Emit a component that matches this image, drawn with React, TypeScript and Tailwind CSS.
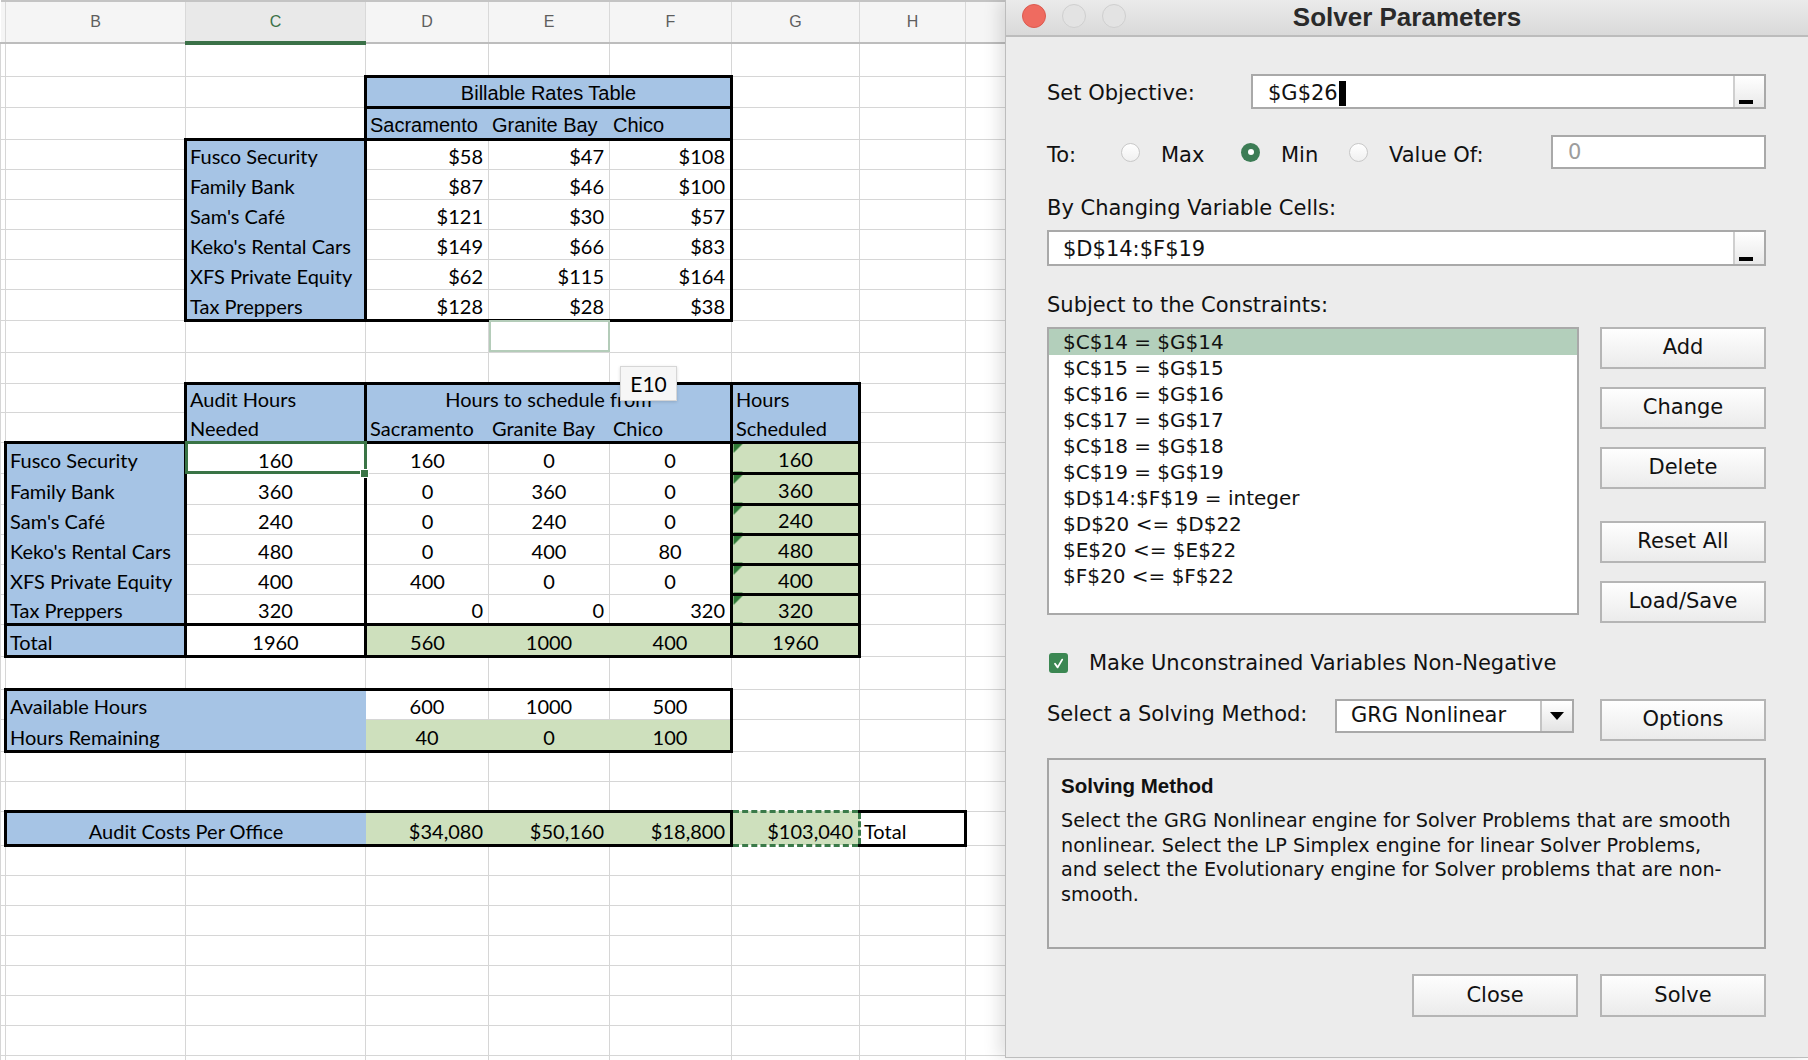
import React from "react";

const FILL: Record<string, string> = {
  b: "border bg-[#a6c4e5] border-[#a6c4e5]",
  g: "border bg-[#cee0bd] border-[#cee0bd]",
  n: "border border-[#d6d6d6]",
  x: "",
};

const ALIGN: Record<string, string> = {
  l: "text-left pl-[3px]",
  c: "text-center",
  r: "text-right pr-[5px]",
  "": "",
};

function Td({
  children,
  fill = "n",
  e = "",
  a = "",
  arial,
  span,
  x = "",
}: {
  children?: React.ReactNode;
  fill?: string;
  e?: string;
  a?: string;
  arial?: boolean;
  span?: number;
  x?: string;
}) {
  const edges = [
    e.includes("t") ? "border-t-[3px] border-t-black" : "",
    e.includes("r") ? "border-r-[3px] border-r-black" : "",
    e.includes("b") ? "border-b-[3px] border-b-black" : "",
    e.includes("l") ? "border-l-[3px] border-l-black" : "",
  ].join(" ");
  return (
    <td
      colSpan={span}
      className={`p-0 align-bottom leading-[26px] whitespace-nowrap ${FILL[fill]} ${edges} ${ALIGN[a]} ${
        arial ? "font-['Liberation_Sans',Arial,sans-serif]" : ""
      } ${x}`}
    >
      {children}
    </td>
  );
}

const empty = (n: number, k: string) => Array.from({ length: n }, (_, i) => <Td key={k + i} />);

// row heights, rows 1..34
const RH = [
  "h-[33px]", "h-[31px]", "h-[32px]", "h-[30px]", "h-[30px]", "h-[30px]", "h-[30px]", "h-[30px]",
  "h-[31px]", "h-[32px]", "h-[31px]", "h-[29px]", "h-[30px]", "h-[31px]", "h-[31px]", "h-[30px]",
  "h-[30px]", "h-[30px]", "h-[30px]", "h-[32px]", "h-[33px]", "h-[30px]", "h-[32px]", "h-[30px]",
  "h-[30px]", "h-[34px]", "h-[30px]", "h-[30px]", "h-[30px]", "h-[30px]", "h-[30px]", "h-[30px]",
  "h-[30px]", "h-[30px]",
];

const names = ["Fusco Security", "Family Bank", "Sam's Café", "Keko's Rental Cars", "XFS Private Equity", "Tax Preppers"];
const rates = [
  ["$58", "$47", "$108"],
  ["$87", "$46", "$100"],
  ["$121", "$30", "$57"],
  ["$149", "$66", "$83"],
  ["$62", "$115", "$164"],
  ["$128", "$28", "$38"],
];
const needed = ["160", "360", "240", "480", "400", "320"];
const sched = [
  ["160", "0", "0"],
  ["0", "360", "0"],
  ["0", "240", "0"],
  ["0", "400", "80"],
  ["400", "0", "0"],
  ["0", "0", "320"],
];

const TRI = "bg-[linear-gradient(135deg,#2f7a37_7px,transparent_7px)]";

function buildRows() {
  const rows: React.ReactNode[][] = [];
  rows.push(empty(9, "a"));
  rows.push([
    ...empty(3, "a"),
    <Td key="d" span={3} fill="b" e="tlrb" a="c" arial>
      Billable Rates Table
    </Td>,
    ...empty(3, "z"),
  ]);
  rows.push([
    ...empty(3, "a"),
    <Td key="d" fill="b" e="lb" a="l" arial>Sacramento</Td>,
    <Td key="e" fill="b" e="b" a="l" arial>Granite Bay</Td>,
    <Td key="f" fill="b" e="rb" a="l" arial>Chico</Td>,
    ...empty(3, "z"),
  ]);
  names.forEach((n, i) => {
    const last = i === 5;
    rows.push([
      ...empty(2, "a"),
      <Td key="c" fill="b" e={"lr" + (i === 0 ? "t" : "") + (last ? "b" : "")} a="l">
        {n}
      </Td>,
      ...rates[i].map((v, j) => (
        <Td key={"v" + j} a="r" e={(j === 2 ? "r" : "") + (last ? "b" : "")}>
          {v}
        </Td>
      )),
      ...empty(3, "z"),
    ]);
  });
  rows.push([...empty(4, "a"), <Td key="e" x="outline-2 outline-[#b4ccb9] -outline-offset-2" />, ...empty(4, "z")]);
  rows.push(empty(9, "a"));
  rows.push([
    ...empty(2, "a"),
    <Td key="c" fill="b" e="tlr" a="l">Audit Hours</Td>,
    <Td key="d" span={3} fill="b" e="t" a="c">Hours to schedule from</Td>,
    <Td key="g" fill="b" e="tlr" a="l">Hours</Td>,
    ...empty(2, "z"),
  ]);
  rows.push([
    <Td key="a" />,
    <Td key="b" e="b" />,
    <Td key="c" fill="b" e="lrb" a="l">Needed</Td>,
    <Td key="d" fill="b" e="b" a="l">Sacramento</Td>,
    <Td key="e" fill="b" e="b" a="l">Granite Bay</Td>,
    <Td key="f" fill="b" e="b" a="l">Chico</Td>,
    <Td key="g" fill="b" e="lrb" a="l">Scheduled</Td>,
    ...empty(2, "z"),
  ]);
  names.forEach((n, i) => {
    const last = i === 5;
    rows.push([
      <Td key="a" />,
      <Td key="b" fill="b" e={"l" + (last ? "b" : "")} a="l">
        {n}
      </Td>,
      <Td
        key="c"
        a="c"
        e={"lr" + (last ? "b" : "")}
        x={i === 0 ? "relative outline-[3px] outline-[#3a7446] -outline-offset-2" : ""}
      >
        {needed[i]}
        {i === 0 && (
          <span className="absolute -right-[5px] -bottom-[5px] h-[9px] w-[9px] border border-white bg-[#3a7446]" />
        )}
      </Td>,
      ...sched[i].map((v, j) => (
        <Td key={"v" + j} a={last ? "r" : "c"} e={last ? "b" : ""}>
          {v}
        </Td>
      )),
      <Td key="g" fill="g" e="tlrb" a="c" x={TRI}>
        {needed[i]}
      </Td>,
      ...empty(2, "z"),
    ]);
  });
  rows.push([
    <Td key="a" />,
    <Td key="b" fill="b" e="lb" a="l">Total</Td>,
    <Td key="c" e="lrb" a="c">1960</Td>,
    <Td key="d" fill="g" e="b" a="c">560</Td>,
    <Td key="e" fill="g" e="b" a="c">1000</Td>,
    <Td key="f" fill="g" e="b" a="c">400</Td>,
    <Td key="g" fill="g" e="tlrb" a="c">1960</Td>,
    ...empty(2, "z"),
  ]);
  rows.push(empty(9, "a"));
  rows.push([
    <Td key="a" />,
    <Td key="b" fill="b" e="tl" a="l">Available Hours</Td>,
    <Td key="c" fill="b" e="t" />,
    <Td key="d" e="t" a="c">600</Td>,
    <Td key="e" e="t" a="c">1000</Td>,
    <Td key="f" e="tr" a="c">500</Td>,
    ...empty(3, "z"),
  ]);
  rows.push([
    <Td key="a" />,
    <Td key="b" fill="b" e="lb" a="l">Hours Remaining</Td>,
    <Td key="c" fill="b" e="b" />,
    <Td key="d" fill="g" e="b" a="c">40</Td>,
    <Td key="e" fill="g" e="b" a="c">0</Td>,
    <Td key="f" fill="g" e="rb" a="c">100</Td>,
    ...empty(3, "z"),
  ]);
  rows.push(empty(9, "a"));
  rows.push(empty(9, "a"));
  rows.push([
    <Td key="a" />,
    <Td key="b" span={2} fill="b" e="tlb" a="c">Audit Costs Per Office</Td>,
    <Td key="d" fill="g" e="tb" a="r">$34,080</Td>,
    <Td key="e" fill="g" e="tb" a="r">$50,160</Td>,
    <Td key="f" fill="g" e="tbr" a="r">$18,800</Td>,
    <Td key="g" fill="x" a="r" x="border-[3px] border-dashed border-[#3a7a49] bg-[#cee0bd]">
      $103,040
    </Td>,
    <Td key="h" e="tbr" a="l">Total</Td>,
    <Td key="i" />,
  ]);
  for (let i = 0; i < 8; i++) rows.push(empty(9, "a"));
  return rows;
}

const COLS = ["", "B", "C", "D", "E", "F", "G", "H", ""];

function Sheet() {
  const rows = buildRows();
  return (
    <div className="relative h-[1060px] w-[1005px] shrink-0 overflow-hidden bg-white">
      <table className="w-[1085px] table-fixed border-collapse font-['Lato',sans-serif] text-[20px] text-black">
        <colgroup>
          <col className="w-[5px]" />
          <col className="w-[180px]" />
          <col className="w-[180px]" />
          <col className="w-[123px]" />
          <col className="w-[121px]" />
          <col className="w-[122px]" />
          <col className="w-[128px]" />
          <col className="w-[106px]" />
          <col className="w-[120px]" />
        </colgroup>
        <thead>
          <tr className="h-[42px]">
            {COLS.map((c, i) =>
              c === "C" ? (
                <th
                  key={i}
                  className="border-t-2 border-r border-b-4 border-t-[#c4c4c4] border-r-[#d9d9d9] border-b-[#3b7148] bg-[#e9e9e9] p-0 font-['Liberation_Sans',sans-serif] text-[16px] font-normal text-[#3b7148]"
                >
                  {c}
                </th>
              ) : (
                <th
                  key={i}
                  className="border-t-2 border-r border-b-2 border-t-[#c4c4c4] border-r-[#d9d9d9] border-b-[#bdbdbd] bg-[#f5f5f5] p-0 font-['Liberation_Sans',sans-serif] text-[16px] font-normal text-[#5e5e5e]"
                >
                  {c}
                </th>
              )
            )}
          </tr>
        </thead>
        <tbody>
          {rows.map((cells, i) => (
            <tr key={i} className={RH[i]}>
              {cells}
            </tr>
          ))}
        </tbody>
      </table>
      <div className="absolute left-[620px] top-[366px] flex h-[35px] w-[57px] items-center justify-center border border-[#d6d6d6] bg-[#f6f6f6] font-['Lato',sans-serif] text-[21px] text-black shadow-[0_1px_3px_rgba(0,0,0,0.15)]">
        E10
      </div>
    </div>
  );
}

function Btn({ children, className = "" }: { children: React.ReactNode; className?: string }) {
  return (
    <div
      className={`flex h-[42px] w-[166px] items-center justify-center border-2 border-[#b5b5b5] bg-linear-to-b from-[#fefefe] to-[#ebebeb] ${className}`}
    >
      {children}
    </div>
  );
}

function Radio({ on }: { on?: boolean }) {
  return on ? (
    <span className="flex h-[19px] w-[19px] items-center justify-center rounded-full bg-[#3c7c55]">
      <span className="h-[6px] w-[6px] rounded-full bg-white" />
    </span>
  ) : (
    <span className="h-[19px] w-[19px] rounded-full border border-[#c8c8c8] bg-linear-to-b from-white to-[#f0f0f0]" />
  );
}

function RangeBtn() {
  return (
    <div className="flex h-full w-[31px] items-end border-l-2 border-[#cfcfcf] bg-linear-to-b from-white to-[#e9e9e9] pb-[3px] pl-[4px]">
      <span className="h-[4px] w-[14px] bg-black" />
    </div>
  );
}

const constraints = [
  "$C$14 = $G$14",
  "$C$15 = $G$15",
  "$C$16 = $G$16",
  "$C$17 = $G$17",
  "$C$18 = $G$18",
  "$C$19 = $G$19",
  "$D$14:$F$19 = integer",
  "$D$20 <= $D$22",
  "$E$20 <= $E$22",
  "$F$20 <= $F$22",
];

function Dialog() {
  return (
    <div className="relative z-10 flex h-[1058px] w-[803px] shrink-0 flex-col border-b border-l border-[#bdbdbd] bg-[#ececec] font-['DejaVu_Sans',sans-serif] text-[21px] text-[#111] shadow-[-6px_0_16px_rgba(0,0,0,0.12)]">
      <div className="relative flex h-[37px] items-center justify-center border-b-2 border-[#bcbcbc] bg-linear-to-b from-[#ebebeb] to-[#d9d9d9]">
        <div className="absolute left-[16px] top-[4px] flex gap-[16px]">
          <span className="h-[24px] w-[24px] rounded-full border border-[#dc5a4f] bg-[#ef6b60]" />
          <span className="h-[24px] w-[24px] rounded-full border border-[#cfcfcf] bg-[#e3e3e3]" />
          <span className="h-[24px] w-[24px] rounded-full border border-[#cfcfcf] bg-[#e3e3e3]" />
        </div>
        <span className="font-['Liberation_Sans',sans-serif] text-[26px] font-bold text-[#2a2a2a]">Solver Parameters</span>
      </div>

      <div className="flex flex-col pl-[41px] pr-[42px]">
        <div className="mt-[37px] flex h-[35px] items-center">
          <span className="w-[204px] translate-y-[2px]">Set Objective:</span>
          <div className="flex h-[35px] flex-1 items-center border-2 border-[#a9a9a9] bg-white">
            <div className="flex flex-1 translate-y-[2px] items-center pl-[15px]">
              <span>$G$26</span>
              <span className="ml-px h-[25px] w-[7px] bg-black" />
            </div>
            <RangeBtn />
          </div>
        </div>

        <div className="mt-[26px] flex h-[34px] items-center">
          <span className="w-[74px] translate-y-[4px]">To:</span>
          <div className="flex w-[120px] items-center">
            <Radio />
            <span className="ml-[21px] translate-y-[4px]">Max</span>
          </div>
          <div className="flex w-[108px] items-center">
            <Radio on />
            <span className="ml-[21px] translate-y-[4px]">Min</span>
          </div>
          <div className="flex items-center">
            <Radio />
            <span className="ml-[21px] translate-y-[4px]">Value Of:</span>
          </div>
          <div className="ml-auto flex h-[34px] w-[215px] items-center border-2 border-[#a9a9a9] bg-white pl-[15px] text-[#9d9d9d]">
            <span className="translate-y-[1px]">0</span>
          </div>
        </div>

        <div className="mt-[27px] h-[24px] leading-[24px]">By Changing Variable Cells:</div>
        <div className="mt-[10px] flex h-[36px] items-center border-2 border-[#a9a9a9] bg-white">
          <div className="flex-1 translate-y-[2px] pl-[14px]">$D$14:$F$19</div>
          <RangeBtn />
        </div>

        <div className="mt-[26px] h-[24px] translate-y-[1px] leading-[24px]">Subject to the Constraints:</div>
        <div className="mt-[11px] flex justify-between">
          <div className="h-[288px] w-[532px] border-2 border-[#a9a9a9] bg-white text-[20px]">
            {constraints.map((c, i) => (
              <div key={i} className={`h-[26px] pl-[14px] leading-[26px] ${i === 0 ? "bg-[#b3cfbb]" : ""}`}>
                {c}
              </div>
            ))}
          </div>
          <div className="flex w-[166px] flex-col">
            <Btn>Add</Btn>
            <Btn className="mt-[18px]">Change</Btn>
            <Btn className="mt-[18px]">Delete</Btn>
            <Btn className="mt-[32px]">Reset All</Btn>
            <Btn className="mt-[18px]">Load/Save</Btn>
          </div>
        </div>

        <div className="mt-[28px] flex h-[24px] items-center">
          <span className="ml-[2px] flex h-[20px] w-[19px] items-center justify-center rounded-[3px] bg-[#3b8752]">
            <svg viewBox="0 0 12 12" className="h-[13px] w-[13px]">
              <path d="M2.8 6.2 L5.2 9.6 L9.4 2.4" fill="none" stroke="white" strokeWidth="1.7" strokeLinecap="round" strokeLinejoin="round" />
            </svg>
          </span>
          <span className="ml-[21px] translate-y-[1px]">Make Unconstrained Variables Non-Negative</span>
        </div>

        <div className="mt-[24px] flex items-start">
          <div className="flex h-[32px] w-[288px] items-center">Select a Solving Method:</div>
          <div className="flex h-[34px] w-[239px] items-center border-2 border-[#a9a9a9] bg-white">
            <div className="flex-1 pl-[14px]">GRG Nonlinear</div>
            <div className="flex h-full w-[32px] items-center justify-center border-l-2 border-[#c4c4c4] bg-linear-to-b from-white to-[#e4e4e4]">
              <svg viewBox="0 0 16 10" className="h-[10px] w-[16px]">
                <polygon points="1,1 15,1 8,9" fill="black" />
              </svg>
            </div>
          </div>
          <Btn className="ml-auto">Options</Btn>
        </div>

        <div className="mt-[17px] h-[191px] border-2 border-[#a5a5a5] px-[12px] pt-[14px]">
          <div className="font-['Liberation_Sans',sans-serif] text-[20.5px] leading-[24px] font-bold">Solving Method</div>
          <p className="mt-[11px] text-[19.2px] leading-[24.5px]">
            Select the GRG Nonlinear engine for Solver Problems that are smooth
            <br />
            nonlinear. Select the LP Simplex engine for linear Solver Problems,
            <br />
            and select the Evolutionary engine for Solver problems that are non-
            <br />
            smooth.
          </p>
        </div>

        <div className="mt-[25px] flex justify-end gap-[22px]">
          <Btn className="h-[43px]">Close</Btn>
          <Btn className="h-[43px]">Solve</Btn>
        </div>
      </div>
    </div>
  );
}

export default function App() {
  return (
    <div className="flex h-[1060px] w-[1808px] overflow-hidden bg-white">
      <Sheet />
      <Dialog />
    </div>
  );
}
